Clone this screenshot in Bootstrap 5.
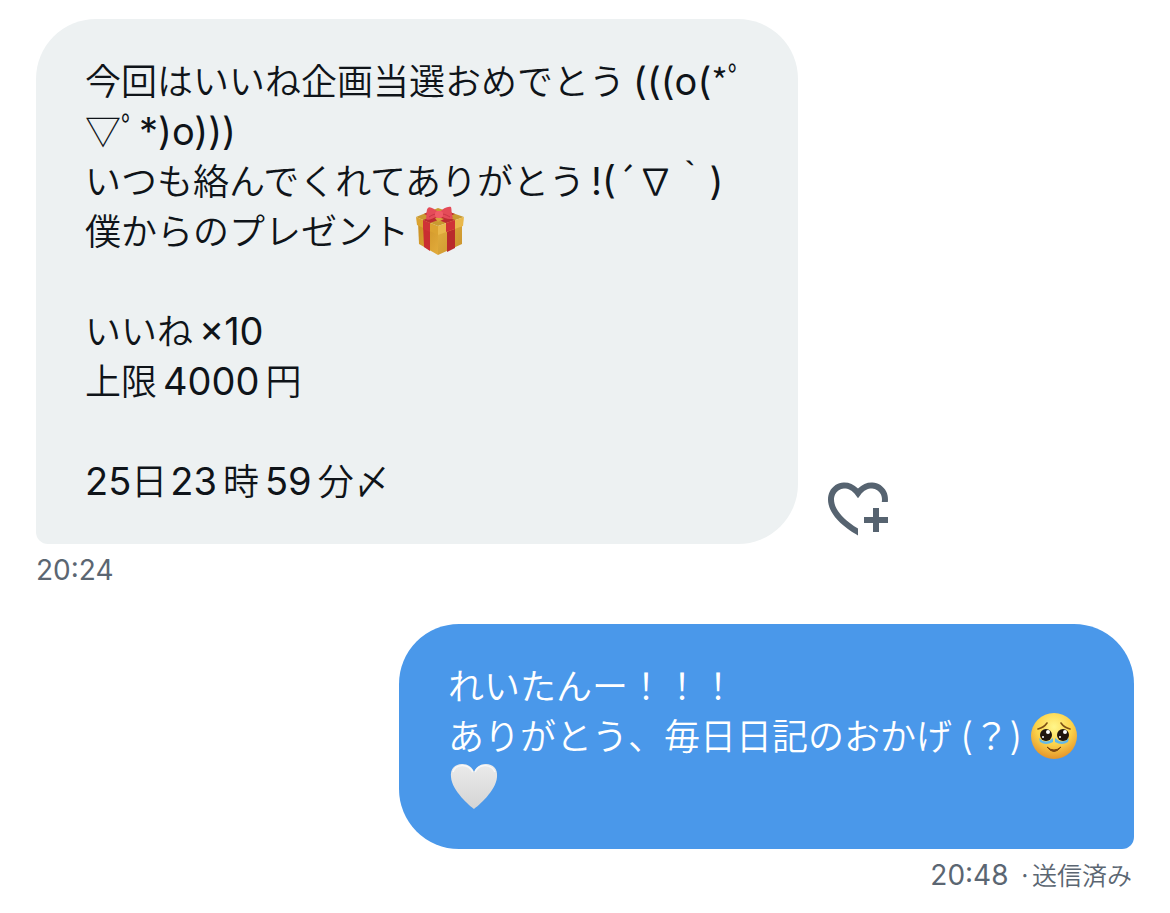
<!DOCTYPE html>
<html lang="ja">
<head>
<meta charset="utf-8">
<meta name="viewport" content="width=device-width, initial-scale=1">
<title>メッセージ</title>
<link href="https://cdn.jsdelivr.net/npm/bootstrap@5.3.0/dist/css/bootstrap.min.css" rel="stylesheet">
<style>
  body { font-family: "Noto Sans CJK JP", sans-serif; font-weight: 350; color: #0f1419; background: #fff; }
  .thread { padding: 19px 36px 0; }
  .bubble { padding: 35px 49px 40px; border-radius: 60px; font-size: 36px; line-height: 50px; }
  .received { background: #edf1f2; border-bottom-left-radius: 12px; width: 762px; }
  .sent { background: #4a98ea; color: #fff; border-bottom-right-radius: 12px; width: 735px; }
  .latin { font-family: Inter, sans-serif; font-size: 38px; line-height: 1; }
  .received .latin { font-weight: 400; }
  .gap-s { margin-left: 3px; }
  .gap-l { margin-left: 6px; }
  .gap-r { margin-right: 6px; }
  .gap-w { margin-left: 8px; }
  .emoji { width: 50px; height: 50px; vertical-align: -6px; margin: -5px 0 -5px 6px; }
  .meta { color: #5b6672; font-size: 25px; line-height: 40px; padding: 5px 2px 0 0; }
  .meta time { font-family: Inter, sans-serif; font-size: 28px; font-weight: 400; line-height: 1; }
  .status { margin-left: 4px; }
  .react { color: #566370; margin-left: 24px; }
  .message + .message { margin-top: 35px; }
</style>
</head>
<body>
<main class="thread d-flex flex-column">
  <article class="message">
    <div class="d-flex align-items-end">
      <p class="bubble received mb-0">今回はいいね企画当選おめでとう<span class="latin gap-w">(((o(</span>*ﾟ<br>▽ﾟ<span class="latin">*)o)))</span><br>いつも絡んでくれてありがとう<span class="latin gap-l">!(</span>´∇｀<span class="latin">)</span><br>僕からのプレゼント<svg class="emoji" viewBox="0 0 50 50" role="img" aria-label="プレゼント">
          <defs>
            <linearGradient id="boxLeft" x1="0" y1="0" x2="1" y2="1"><stop offset="0" stop-color="#c98e22"/><stop offset="1" stop-color="#e2ac3c"/></linearGradient>
            <linearGradient id="boxRight" x1="0" y1="0" x2="1" y2="1"><stop offset="0" stop-color="#e3b03f"/><stop offset="1" stop-color="#c8922c"/></linearGradient>
          </defs>
          <path d="M3 16 23 25v24L4 38z" fill="url(#boxLeft)"/>
          <path d="M23 25 47 16v22L23 49z" fill="url(#boxRight)"/>
          <path d="M8 18l7 3v24l-6-4z" fill="#c92d31"/>
          <path d="M32 22l8-4v24l-8 4z" fill="#b92b2c"/>
          <path d="M1 11 23 2 49 11 23 20z" fill="#c99a31"/>
          <path d="M1 11 23 20v9L2 19z" fill="#dba331"/>
          <path d="M23 20 49 11l-1 9-25 9z" fill="#e9b84b"/>
          <path d="M8 14 32 5l8 3-25 9z" fill="#bc2c31"/>
          <path d="M15 5 40 14l-9 3L9 8z" fill="#bc2c31"/>
          <path d="M20 12l3-1 6 2-6 3z" fill="#d7a43a"/>
          <path d="M8 14l7 3v9l-7-3z M31 17l9-3v9l-9 3z" fill="#cf3237"/>
          <path d="M24 7C19 2 14 0 13 2c-2 2-1 6-2 11 1 2 7 0 13-4 6 4 12 5 14 3-2-5-1-8-2-11C33 0 28 2 24 7z" fill="#e44b58"/>
          <path d="M14 11c3-2 5-3 8-3M27 8c3 0 6 2 8 3" fill="none" stroke="#c93547" stroke-width="1"/>
          <rect x="20" y="5" width="8" height="7" rx="3" fill="#f05b66"/>
        </svg><br><br>いいね<span class="latin gap-l">×10</span><br>上限<span class="latin gap-l gap-r">4000</span>円<br><br><span class="latin">25</span>日<span class="latin gap-s gap-r">23</span>時<span class="latin gap-l gap-r">59</span>分〆</p>
      <button type="button" class="react btn border-0 p-0 lh-1" aria-label="リアクションを追加">
        <svg class="d-block" width="72" height="72" viewBox="0 0 24 24" fill="currentColor" aria-hidden="true"><path d="M17 12v3h-2.998v2h3v3h2v-3h3v-2h-3.001v-3H17zm-5 6.839c-3.871-2.34-6.053-4.639-7.127-6.609-1.112-2.04-1.031-3.7-.479-4.82.561-1.13 1.667-1.84 2.91-1.91 1.222-.06 2.68.51 3.892 2.16l.806 1.09.805-1.09c1.211-1.65 2.668-2.22 3.89-2.16 1.242.07 2.347.78 2.908 1.91.334.677.49 1.554.321 2.59h2.011c.153-1.283-.039-2.469-.539-3.48-.887-1.79-2.647-2.91-4.601-3.01-1.65-.09-3.367.56-4.796 2.01-1.43-1.45-3.147-2.1-4.798-2.01-1.954.1-3.714 1.22-4.601 3.01-.896 1.81-.846 4.17.514 6.67 1.353 2.48 4.003 5.12 8.382 7.67l.502.299v-2.32z"/></svg>
      </button>
    </div>
    <div class="meta"><time>20:24</time></div>
  </article>
  <article class="message d-flex flex-column align-items-end">
    <p class="bubble sent mb-0">れいたんー！！！<br>ありがとう、毎日日記のおかげ<span class="latin gap-w">(</span>？<span class="latin">)</span><svg class="emoji" viewBox="0 0 50 50" role="img" aria-label="うるうる顔">
        <defs>
          <radialGradient id="skin" cx=".5" cy=".3" r=".7"><stop offset="0" stop-color="#fff68a"/><stop offset=".55" stop-color="#fcd34b"/><stop offset="1" stop-color="#e5942a"/></radialGradient>
        </defs>
        <circle cx="25" cy="25" r="23" fill="url(#skin)"/>
        <path d="M9 18c4-1 7-3 9-6M41 18c-4-1-7-3-9-6" fill="none" stroke="#7d5015" stroke-width="1.6" stroke-linecap="round"/>
        <path d="M10 27q7 7 14 0v4q-7 4-13 0zM26 27q7 7 14 0l-1 4q-6 4-13 0z" fill="#63b9e8"/>
        <circle cx="17" cy="24" r="6" fill="#20150e"/><circle cx="34" cy="24" r="6" fill="#20150e"/>
        <circle cx="19" cy="21" r="2" fill="#fff"/><circle cx="36" cy="21" r="2" fill="#fff"/>
        <circle cx="14" cy="26" r="1" fill="#fff"/><circle cx="31" cy="26" r="1" fill="#fff"/>
        <path d="M18 36q7 6 14 0-7 9-14 0z" fill="#7b4611" stroke="#7b4611" stroke-width="1"/>
      </svg><br><svg class="emoji ms-0" viewBox="0 0 50 50" role="img" aria-label="白いハート">
        <defs><linearGradient id="whiteHeart" x1="0" y1="0" x2="0" y2="1"><stop offset="0" stop-color="#ebebeb"/><stop offset="1" stop-color="#d4d4d4"/></linearGradient></defs>
        <path d="M26 48C22 45 4 30 3 16 2 8 7 3 14 3c6 0 10 3 12 8 2-5 6-8 12-8 7 0 12 5 11 13-1 14-19 29-23 32z" fill="url(#whiteHeart)"/>
        <path d="M5 11c2-7 14-10 20 0M27 11c5-10 17-7 20 0" fill="none" stroke="#f8f8f8" stroke-width="1.5"/>
      </svg></p>
    <div class="meta"><time>20:48</time> <span class="status">·送信済み</span></div>
  </article>
</main>
<script src="https://cdn.jsdelivr.net/npm/bootstrap@5.3.0/dist/js/bootstrap.bundle.min.js"></script>
</body>
</html>
